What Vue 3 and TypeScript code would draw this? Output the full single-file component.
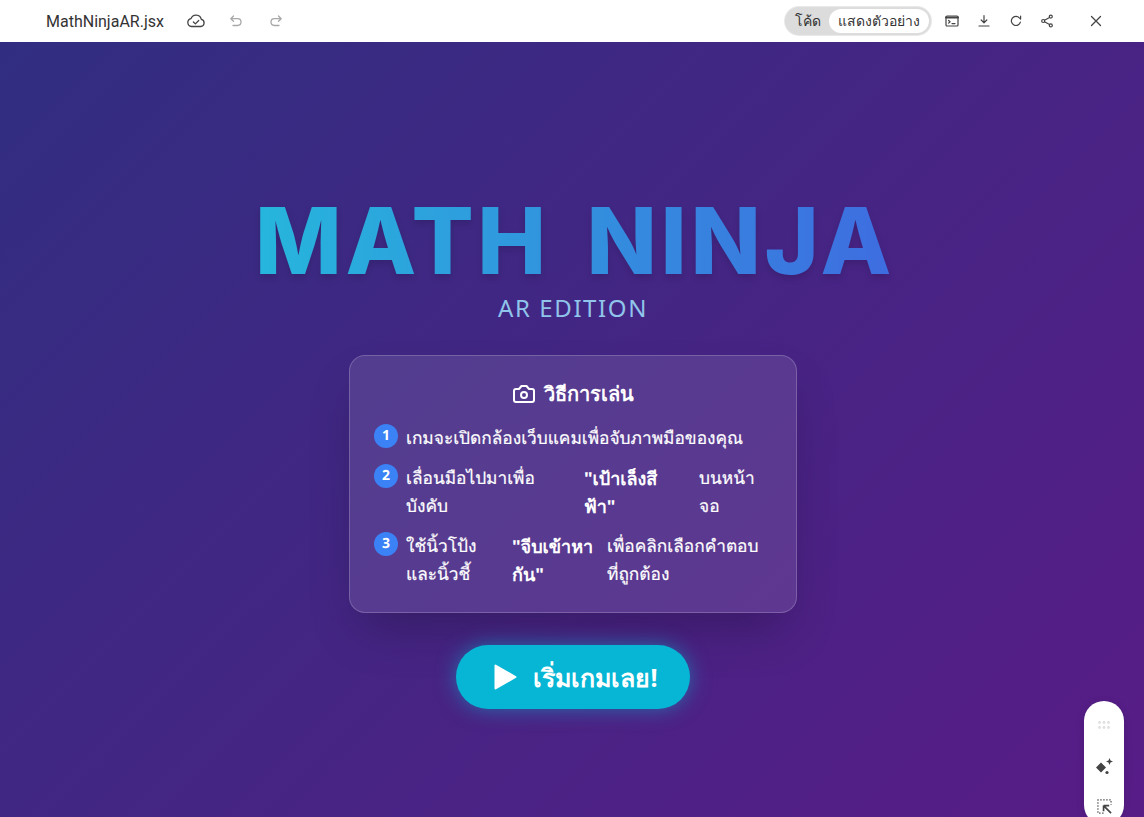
<script setup lang="ts">
const steps: string[][][] = [
  [['เกมจะเปิดกล้องเว็บแคมเพื่อจับภาพมือของคุณ']],
  [['เลื่อนมือไปมาเพื่อ', 'บังคับ'], ['"เป้าเล็งสี', 'ฟ้า"'], ['บนหน้า', 'จอ']],
  [['ใช้นิ้วโป้ง', 'และนิ้วชี้'], ['"จีบเข้าหา', 'กัน"'], ['เพื่อคลิกเลือกคำตอบ', 'ที่ถูกต้อง']],
]
</script>

<template>
  <div class="app">
    <header class="topbar">
      <div class="left">
        <span class="filename">MathNinjaAR.jsx</span>
        <svg class="ico cloud" viewBox="0 0 20 20"><path d="M5.500 15.500h9.200a3.600 3.600 0 0 0 .6-7.100A5.400 5.400 0 0 0 5 7.600a4 4 0 0 0 .5 7.900z"/><path d="M7.400 11l2 1.900 3.300-3.400"/></svg>
        <svg class="ico muted undo" viewBox="0 0 16 16"><path d="M5.500 3 2.800 5.700l2.700 2.600M3 5.700h6.600a3.400 3.400 0 0 1 0 6.800H5"/></svg>
        <svg class="ico muted" viewBox="0 0 16 16"><path d="m10.500 3 2.700 2.700-2.700 2.600M13 5.700H6.400a3.400 3.400 0 0 0 0 6.800H11"/></svg>
      </div>
      <div class="right">
        <div class="toggle">
          <span class="tab">โค้ด</span>
          <span class="tab active">แสดงตัวอย่าง</span>
        </div>
        <svg class="ico act" viewBox="0 0 16 16"><rect x="2" y="3" width="12" height="10" rx="1"/><path class="bar" d="M2 4.500h12"/><path d="M4.600 7.500l1.500 1.300-1.500 1.300M8 10.600h3"/></svg>
        <svg class="ico act" viewBox="0 0 16 16"><path d="M8 2.500v7M5.200 7 8 9.800 10.800 7M3 13h10"/></svg>
        <svg class="ico act" viewBox="0 0 16 16"><path d="M12.400 9.200a4.600 4.600 0 1 1-1-4.400L12.600 6V3"/></svg>
        <svg class="ico act share" viewBox="0 0 16 16"><circle cx="11.800" cy="3.600" r="1.500"/><circle cx="4.200" cy="8" r="1.500"/><circle cx="11.800" cy="12.400" r="1.500"/><path d="m5.500 7.200 5-2.800M5.500 8.800l5 2.800"/></svg>
        <svg class="ico close" viewBox="0 0 16 16"><path d="m3.500 3.500 9 9M12.500 3.500l-9 9"/></svg>
      </div>
    </header>

    <main class="stage">
      <h1 class="title">MATH NINJA</h1>
      <p class="subtitle">AR EDITION</p>

      <section class="card">
        <h2 class="card-title">
          <svg class="camera" viewBox="0 0 24 24"><path d="M14.500 4h-5L7 7H4a2 2 0 0 0-2 2v9a2 2 0 0 0 2 2h16a2 2 0 0 0 2-2V9a2 2 0 0 0-2-2h-3z"/><circle cx="12" cy="13" r="3"/></svg>
          วิธีการเล่น
        </h2>
        <ol class="steps">
          <li v-for="(parts, i) in steps" :key="i" class="step">
            <span class="num">{{ i + 1 }}</span>
            <div class="parts" :class="`parts-${i + 1}`">
              <div v-for="(lines, j) in parts" :key="j" :class="{ strong: j === 1 }">
                <span v-for="line in lines" :key="line" class="line">{{ line }}</span>
              </div>
            </div>
          </li>
        </ol>
      </section>

      <button class="start">
        <svg class="play" viewBox="0 0 23 28"><path d="M1.500 2.500v23L21.500 14z"/></svg>
        เริ่มเกมเลย!
      </button>
    </main>

    <aside class="float">
      <svg class="grip" viewBox="0 0 12 8"><circle cx="1.500" cy="1.500" r="1.400"/><circle cx="6" cy="1.500" r="1.400"/><circle cx="10.500" cy="1.500" r="1.400"/><circle cx="1.500" cy="6.500" r="1.400"/><circle cx="6" cy="6.500" r="1.400"/><circle cx="10.500" cy="6.500" r="1.400"/></svg>
      <svg class="spark" viewBox="0 0 20 20"><path d="M7 5.500l5 5-5 5-5-5zM15.500 1l1 2.500 2.500 1-2.500 1-1 2.500-1-2.500-2.500-1 2.500-1z"/><circle cx="13" cy="15.500" r="1.600"/></svg>
      <svg class="select" viewBox="0 0 16 16"><path class="dash" d="M7 15H1V1h14v5"/><path class="arrow" d="M7 7h6M7 7v6M7 7l8 8"/></svg>
    </aside>
  </div>
</template>

<style>
html, body { margin: 0; background: #fff; }
</style>

<style scoped>
.app {
  position: relative;
  width: 1144px;
  height: 817px;
  overflow: hidden;
  display: flex;
  flex-direction: column;
  font-family: "Noto Sans", "Open Sans", sans-serif;
}
.topbar {
  height: 42px;
  flex: none;
  background: #fff;
  display: flex;
  align-items: center;
  justify-content: space-between;
  padding: 0 40px 0 46px;
}
.left, .right { display: flex; align-items: center; }
.filename {
  font-family: Roboto, sans-serif;
  font-size: 16px;
  color: #333;
  margin-right: 22px;
}
.ico {
  fill: none;
  stroke: #444;
  stroke-width: 1.3;
  stroke-linecap: round;
  stroke-linejoin: round;
}
.cloud { width: 20px; height: 20px; margin-right: 22px; }
.muted { stroke: #a8a8a8; width: 16px; height: 16px; }
.undo { margin-right: 24px; }
.toggle {
  display: flex;
  align-items: center;
  height: 28px;
  box-sizing: border-box;
  padding: 2px;
  border-radius: 14px;
  background: #dcdcdc;
  box-shadow: 0 0 0 1px #e9e9e9;
  font-size: 14px;
  color: #333;
  margin-right: 13px;
}
.tab { padding: 0 8px; line-height: 24px; }
.active { padding: 0 9px; background: #fff; border-radius: 12px; }
.act { width: 16px; height: 16px; margin-left: 16px; stroke-width: 1.2; }
.act:first-of-type { margin-left: 0; }
.bar { stroke-width: 2; }
.share { margin-left: 15px; }
.close { width: 16px; height: 16px; margin-left: 33px; }
.stage {
  flex: 1;
  display: flex;
  flex-direction: column;
  align-items: center;
  background: linear-gradient(135deg, #312e81, #581c87);
  color: #fff;
  padding: 151px 0 0 2px;
  box-sizing: border-box;
}
.title {
  margin: 0 0 0 4px;
  font-family: Inter, Roboto, sans-serif;
  font-size: 92px;
  line-height: 96px;
  font-weight: 850;
  letter-spacing: 3.6px;
  word-spacing: 13px;
  background: linear-gradient(90deg, #26b6dc, #3e6ce0);
  -webkit-background-clip: text;
  background-clip: text;
  color: transparent;
  filter: drop-shadow(0 4px 3px rgba(0, 0, 0, 0.12));
}
.subtitle {
  margin: 3px 0 31px;
  font-size: 24px;
  line-height: 32px;
  letter-spacing: 1.6px;
  color: #90c4ea;
}
.card {
  width: 448px;
  box-sizing: border-box;
  padding: 24px;
  border-radius: 16px;
  border: 1px solid rgba(255, 255, 255, 0.2);
  background: rgba(255, 255, 255, 0.1);
  box-shadow: 0 25px 50px -12px rgba(0, 0, 0, 0.25);
  margin-bottom: 32px;
}
.card-title {
  margin: 0 0 16px;
  display: flex;
  align-items: center;
  justify-content: center;
  gap: 8px;
  font-size: 20px;
  line-height: 28px;
  font-weight: 700;
}
.camera {
  width: 24px;
  height: 24px;
  fill: none;
  stroke: #fff;
  stroke-width: 2;
  stroke-linejoin: round;
}
.steps {
  list-style: none;
  margin: 0;
  padding: 0;
  display: flex;
  flex-direction: column;
  gap: 12px;
}
.step {
  display: flex;
  align-items: flex-start;
  gap: 8px;
  height: auto;
  font-size: 17.300px;
  line-height: 28px;
  font-weight: 500;
  text-rendering: geometricPrecision;
  -webkit-text-stroke: 0.2px #fff;
}
.num {
  flex: none;
  width: 24px;
  height: 24px;
  border-radius: 50%;
  background: #3b82f6;
  display: flex;
  align-items: center;
  justify-content: center;
  font-size: 14px;
  line-height: 20px;
  font-weight: 700;
  -webkit-text-stroke: 0;
}
.parts { display: grid; transform: translateY(1px); }
.parts-2 { grid-template-columns: 178px 115px 1fr; }
.parts-3 { grid-template-columns: 106px 95px 1fr; }
.line { display: block; white-space: nowrap; }
.strong { font-size: 18px; font-weight: 700; -webkit-text-stroke: 0; }
.start {
  display: flex;
  align-items: center;
  gap: 16px;
  height: 64px;
  padding: 0 32px 0 38px;
  border: 0;
  border-radius: 32px;
  background: #06b6d4;
  color: #fff;
  font: 700 25px/32px "Noto Sans", sans-serif;
  box-shadow: 0 0 20px rgba(6, 182, 212, 0.5);
}
.play { width: 23px; height: 28px; fill: #fff; stroke: #fff; stroke-width: 2; stroke-linejoin: round; }
.float {
  position: absolute;
  left: 1084px;
  top: 701px;
  width: 40px;
  height: 124px;
  border-radius: 20px;
  background: #fff;
  box-shadow: 0 2px 8px rgba(0, 0, 0, 0.12);
  display: flex;
  flex-direction: column;
  align-items: center;
}
.grip { width: 12px; height: 8px; margin-top: 20px; fill: #e0e0e0; }
.spark { width: 20px; height: 20px; margin-top: 28px; fill: #444; }
.select { width: 15px; height: 15px; margin-top: 22px; fill: none; }
.dash { stroke: #555; stroke-width: 1.300; stroke-dasharray: 1.600 1.600; }
.arrow { stroke: #444; stroke-width: 1.800; }
</style>
